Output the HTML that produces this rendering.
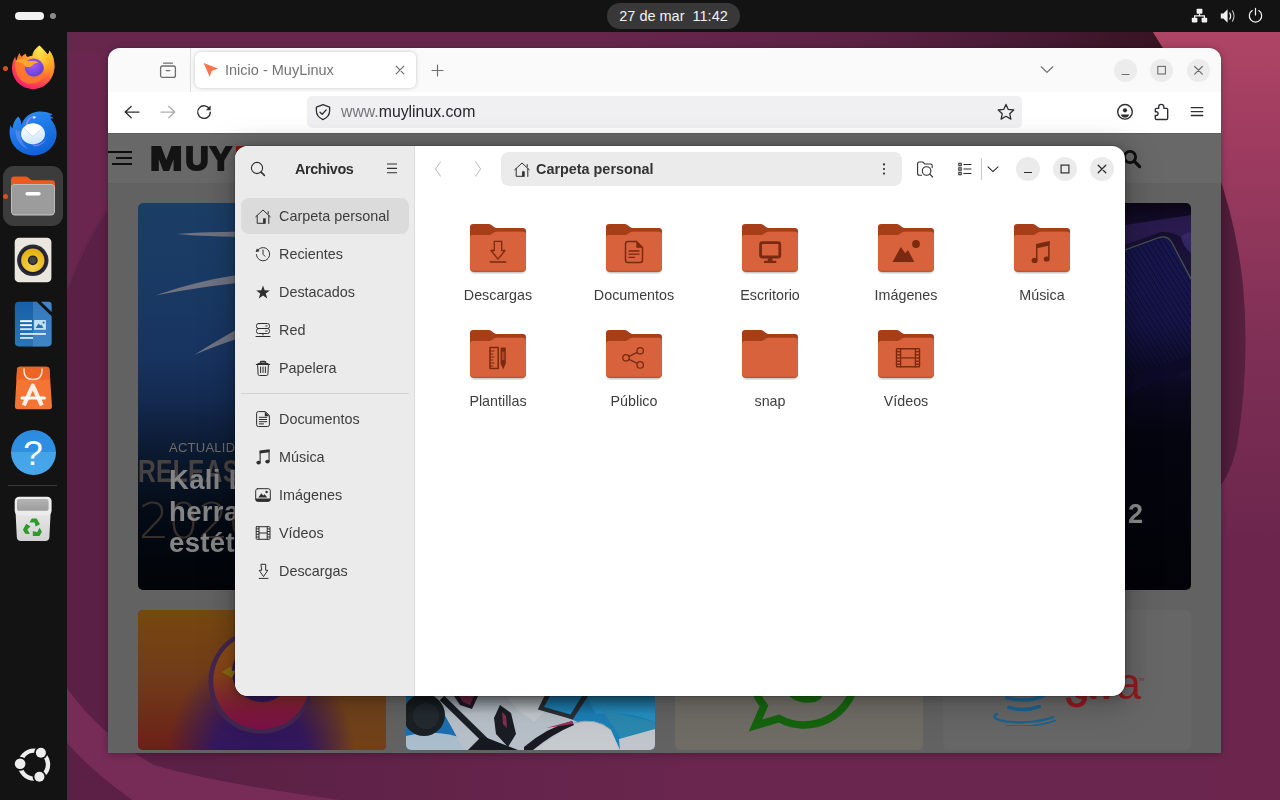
<!DOCTYPE html>
<html lang="es">
<head>
<meta charset="utf-8">
<title>Escritorio Ubuntu</title>
<style>
*{box-sizing:border-box;margin:0;padding:0}
html,body{width:1280px;height:800px;overflow:hidden;background:#6a264e;font-family:"Liberation Sans","DejaVu Sans",sans-serif;}
.abs{position:absolute}
#desk{position:absolute;left:0;top:0;width:1280px;height:800px;overflow:hidden}
#wall{position:absolute;left:0;top:0;width:1280px;height:800px}
/* top bar */
#topbar{position:absolute;left:0;top:0;width:1280px;height:32px;background:#131313}
#clock{position:absolute;left:607px;top:3px;width:133px;height:26px;border-radius:13px;background:#383838;color:#f2f2f2;font-size:14.5px;line-height:26px;text-align:center;white-space:pre}
#act{position:absolute;left:15px;top:12px;width:29px;height:8px;border-radius:4px;background:#f2f2f2}
#actdot{position:absolute;left:50px;top:13px;width:6px;height:6px;border-radius:3px;background:#8c8c8c}
/* dock */
#dock{position:absolute;left:0;top:32px;width:67px;height:768px;background:#131313}
.run{position:absolute;left:3px;width:5px;height:5px;border-radius:50%;background:#d9501e}
/* firefox */
#ff{will-change:transform;position:absolute;left:108px;top:48px;width:1113px;height:705px;border-radius:12px 12px 0 0;overflow:hidden;background:#656565;box-shadow:0 1px 7px rgba(0,0,0,.3)}
#fftabs{position:absolute;left:0;top:0;width:1113px;height:44px;background:#fafafa}
#ffnav{position:absolute;left:0;top:44px;width:1113px;height:41px;background:#ffffff}
#fftab{position:absolute;left:87px;top:4px;width:221px;height:36px;border-radius:6px;background:#fff;box-shadow:0 0 4px rgba(0,0,0,.2)}
#fftab span{position:absolute;left:30px;top:1px;line-height:35px;font-size:14.5px;color:#737376;white-space:nowrap}
#url{position:absolute;left:199px;top:4px;width:715px;height:32px;border-radius:5px;background:#f0f0f2}
#url span{position:absolute;left:34px;top:-.5px;line-height:32px;font-size:15.8px;color:#26262b;white-space:nowrap}
#url span i{font-style:normal;color:#77777c}
.wb{position:absolute;width:23px;height:23px;border-radius:50%;background:#ececec}
#page{position:absolute;left:0;top:85px;width:1113px;height:620px;background:#626262;overflow:hidden}
#phead{position:absolute;left:0;top:0;width:1113px;height:50px;background:#686868;box-shadow:inset 0 1px 0 #5c5c5c}
/* files */
#fm{will-change:transform;position:absolute;left:235px;top:146px;width:890px;height:550px;border-radius:13px;overflow:hidden;background:#fff;box-shadow:0 0 0 1px rgba(0,0,0,.14),0 2px 8px 2px rgba(0,0,0,.17),0 3px 20px 10px rgba(0,0,0,.11),0 6px 32px 16px rgba(0,0,0,.05)}
#side{position:absolute;left:0;top:0;width:180px;height:550px;background:#ebebeb;border-right:1px solid #dcdcdc}
.row{position:absolute;left:6px;width:168px;height:36px;border-radius:8px;font-size:14.4px;color:#3d3d3d;line-height:36px;padding-left:38px;white-space:nowrap}
.row.sel{background:#dbdbdb}
.row svg{position:absolute;left:14px;top:10px;width:16px;height:16px}
#path{position:absolute;left:266px;top:6px;width:401px;height:34px;border-radius:8px;background:#ebebeb}
#path b{position:absolute;left:35px;top:0;line-height:34px;font-size:14.4px;color:#333;white-space:nowrap}
.fb{position:absolute;width:24px;height:24px;border-radius:50%;background:#ebebeb}
.fold{position:absolute;width:136px;height:100px;text-align:center;font-size:14.3px;color:#3d3d3d;}
.fold svg{position:absolute;left:38px;top:0;width:60px;height:52px}
.fold span{position:absolute;left:0;width:136px;top:64.3px;line-height:18px}
</style>
</head>
<body>
<div id="desk">
<svg id="wall" viewBox="0 0 1280 800">
<defs>
<linearGradient id="wtop" x1="600" y1="0" x2="1160" y2="0" gradientUnits="userSpaceOnUse"><stop offset="0" stop-color="#67264c"/><stop offset="0.45" stop-color="#5c2244"/><stop offset="0.8" stop-color="#451932"/><stop offset="1" stop-color="#381322"/></linearGradient>
<linearGradient id="wpink" x1="0" y1="32" x2="0" y2="540" gradientUnits="userSpaceOnUse"><stop offset="0" stop-color="#ae4565"/><stop offset="0.2" stop-color="#a03c60"/><stop offset="0.58" stop-color="#813056"/><stop offset="1" stop-color="#6c264d"/></linearGradient>
<linearGradient id="wcres" x1="1221" y1="0" x2="1250" y2="0" gradientUnits="userSpaceOnUse"><stop offset="0" stop-color="#4a1b36"/><stop offset="1" stop-color="#5a2142"/></linearGradient>
</defs>
<rect width="1280" height="800" fill="#6a264e"/>
<rect x="67" y="32" width="1213" height="20" fill="url(#wtop)"/>
<path d="M1153 32 H1280 V560 H1215 V70 L1163 48 Z" fill="#ae4565"/>
<path d="M1153 32 H1280 V560 H1215 V70 L1163 48 Z" fill="url(#wpink)"/>

<path d="M1215 165 Q1236 220 1243 285 Q1250 360 1238 440 Q1232 475 1215 492 Z" fill="url(#wcres)"/>
<path d="M67 287 Q82 245 110 203 V700 H67 Z" fill="#5b2045"/>
<path d="M67 289 Q82 247 110 205" fill="none" stroke="#7a3060" stroke-width="1" opacity=".6"/>
<linearGradient id="wbot" x1="200" y1="0" x2="700" y2="0" gradientUnits="userSpaceOnUse"><stop offset="0" stop-color="#5b2045"/><stop offset="1" stop-color="#6a264e"/></linearGradient>
<rect x="67" y="700" width="1213" height="100" fill="url(#wbot)"/>
<rect x="1215" y="540" width="65" height="260" fill="#6c264d"/>
<path d="M67 688 Q100 735 154 765 Q216 783 340 800 H132 Q91 771 67 743 Z" fill="#772b57"/>
<path d="M67 743 Q91 771 132 800 H67 Z" fill="#5c2046"/>
</svg>

<div id="topbar">
  <div id="act"></div><div id="actdot"></div>
  <div id="clock">27 de mar  11:42</div>
  <svg class="abs" style="left:1191px;top:8px;width:17px;height:16px" viewBox="0 0 17 16"><g fill="#f2f2f2"><rect x="5.6" y="0.8" width="5.8" height="5" rx="0.8"/><rect x="0.8" y="9.8" width="5.6" height="4.6" rx="0.8"/><rect x="10.6" y="9.8" width="5.6" height="4.6" rx="0.8"/></g><path d="M8.5 5.5 V7.8 M3.6 10 V7.8 H13.4 V10" fill="none" stroke="#f2f2f2" stroke-width="1.2"/></svg>
  <svg class="abs" style="left:1220px;top:8px;width:17px;height:16px" viewBox="0 0 17 16"><path d="M0.8 5.4 H3.4 L7.6 1.2 V14.8 L3.4 10.6 H0.8 Z" fill="#f2f2f2"/><path d="M9.8 5 Q11.6 8 9.8 11" fill="none" stroke="#f2f2f2" stroke-width="1.2" stroke-linecap="round"/><path d="M12.4 2.8 Q15.6 8 12.4 13.2" fill="none" stroke="#bdbdbd" stroke-width="1.1" stroke-linecap="round"/></svg>
  <svg class="abs" style="left:1247px;top:7px;width:17px;height:17px" viewBox="0 0 17 17"><path d="M5.2 3.6 A6.2 6.2 0 1 0 11.8 3.6" fill="none" stroke="#f2f2f2" stroke-width="1.2" stroke-linecap="round"/><path d="M8.5 1.4 V8" stroke="#f2f2f2" stroke-width="1.2" stroke-linecap="round"/></svg>

</div>

<div id="dock">
<div class="run" style="top:33.5px"></div>
<div class="run" style="top:161.5px"></div>
<div class="abs" style="left:3px;top:134px;width:60px;height:60px;border-radius:11px;background:#3c3c3c"></div>
<div class="run" style="top:161.5px"></div>
<!-- firefox -->
<svg class="abs" style="left:9px;top:11px;width:48px;height:48px" viewBox="0 0 48 48">
<defs>
<radialGradient id="ffo" cx="0.72" cy="0.12" r="1.0"><stop offset="0" stop-color="#fff36a"/><stop offset="0.28" stop-color="#ffbd2e"/><stop offset="0.55" stop-color="#ff7a2a"/><stop offset="0.8" stop-color="#ff3d55"/><stop offset="1" stop-color="#e5127d"/></radialGradient>
<radialGradient id="ffp" cx="0.45" cy="0.3" r="0.8"><stop offset="0" stop-color="#b15cf0"/><stop offset="0.6" stop-color="#6e46e0"/><stop offset="1" stop-color="#4a35b8"/></radialGradient>
<linearGradient id="ffy" x1="0" y1="0" x2="0.4" y2="1"><stop offset="0" stop-color="#fff15e"/><stop offset="0.5" stop-color="#ffc02a"/><stop offset="1" stop-color="#ff8a2a"/></linearGradient>
</defs>
<path d="M30.4 2.6 C33 5.5 36 8 38.5 11.5 C40 10.5 40.5 9 40.4 7.6 C44 12 45.6 17.5 45.4 24 C45 36.5 36 46 24.2 46 C12.4 46 3 36.8 3 25 C3 20 4.4 16.4 6.4 13.6 C6.4 15.4 6.8 16.8 7.4 17.8 C8 14.6 9.2 12 10.6 9.8 C10.8 11.6 11.6 13 12.8 13.8 C13.8 12.6 15.2 11.4 16.6 10.8 C16.8 12.2 17.6 13.4 18.8 14 C20.4 13.2 22 12.8 23.4 12.8 C23.6 9 26.4 5.4 30.4 2.6 Z" fill="url(#ffo)"/>
<circle cx="24.6" cy="25.6" r="10.2" fill="url(#ffp)"/>
<path d="M6.6 18.5 C9 16 12.4 15.2 15.4 15.8 C17 17.6 20 18.4 23 18 C26 17.6 28.4 18.6 29.4 20.2 C27 19.8 24.8 20.6 23.4 22.2 C21.6 24.2 18.6 24.4 16 23.2 C15.4 28 18.6 32.2 23 33.2 C28.6 34.4 33.6 30.8 34.6 25.6 C35.8 30.2 34 35.8 29.2 38.8 C22.2 43 12.4 40.2 8.6 32.4 C6.2 27.4 5.8 22.2 6.6 18.5 Z" fill="#ff7a2a" opacity=".9"/>
<path d="M6.6 18.5 C9 16 12.4 15.2 15.4 15.8 C17 17.6 20 18.4 23 18 C26 17.6 28.4 18.6 29.4 20.2 C27 19.8 24.8 20.6 23.4 22.2 C21.6 24.2 18.6 24.4 16 23.2 C14.6 21 11 19 6.6 18.5 Z" fill="#ffa62a"/>
<path d="M30.4 2.6 C33 5.5 36 8 38.5 11.5 C40 10.5 40.5 9 40.4 7.6 C44 12 45.6 17.5 45.4 24 C45.2 28.6 43.6 32.6 41 36 C42 30.6 41 25 38 21.6 C36.6 16.8 33 14 29 13 C29.4 9.4 30 5.8 30.4 2.6 Z" fill="url(#ffy)" opacity=".95"/>
</svg>
<!-- thunderbird -->
<svg class="abs" style="left:9px;top:76px;width:48px;height:48px" viewBox="0 0 48 48">
<defs>
<linearGradient id="tbb" x1="0.2" y1="0" x2="0.6" y2="1"><stop offset="0" stop-color="#2f8ff2"/><stop offset="0.55" stop-color="#1a73e4"/><stop offset="1" stop-color="#1062d6"/></linearGradient>
<linearGradient id="tbe" x1="0" y1="0" x2="0.3" y2="1"><stop offset="0" stop-color="#ffffff"/><stop offset="1" stop-color="#cfe6fb"/></linearGradient>
</defs>
<path d="M9.2 8.5 C11.6 11 12.6 14.4 12.4 17.6 C13.6 12 18.4 5.6 27 4 C33 2.8 39.4 4.4 43.6 6.2 C42.4 6.8 41.4 7.4 40.8 8.2 C42.4 8.4 43.8 9.2 44.6 10.2 C43.2 10.2 42.2 10.6 41.6 11.2 C45.2 15 47.6 20 47.6 25.6 C47.6 37.6 37.6 47.4 25.4 47.4 C12.4 47.4 0.6 38.6 0.6 24 C0.6 21.2 1 18.8 1.6 17.2 C2.2 18.6 2.8 19.8 3.6 20.6 C3.8 15.6 5.8 11.4 9.2 8.5 Z" fill="url(#tbb)"/>
<path d="M6.6 21.6 C5.6 30 11 38.6 20 41.6 C14 37 10.8 30.6 11 23.6 C9.6 23.6 7.8 22.8 6.6 21.6 Z" fill="#5e8cf0" opacity=".75"/>
<path d="M16.6 17.4 C17 12.6 20.6 8.6 25.4 7.6 C21.6 9.8 18.8 13.4 18 18 Z" fill="#9b8af0" opacity=".9"/>
<ellipse cx="24" cy="26" rx="12" ry="10.4" fill="url(#tbe)"/>
<path d="M14.6 19.8 L24 28.6 L33.4 19.8 C31 17 27.8 15.6 24 15.6 C20.2 15.6 17 17 14.6 19.8 Z" fill="#ffffff"/>
<path d="M14.6 19.8 L24 28.6 L33.4 19.8" fill="none" stroke="#bcd9f6" stroke-width=".8"/>
<path d="M23.4 36.6 C29.6 37.6 35.6 34.4 38 29.6 C36 35.6 30.6 38.6 25.6 38.4 C24.6 38 23.8 37.4 23.4 36.6 Z" fill="#7b86f2" opacity=".85"/>
<ellipse cx="25.2" cy="9.4" rx="1.6" ry="1.1" fill="#eaf4ff" transform="rotate(-20 25.2 9.4)"/>
</svg>
<!-- files -->
<svg class="abs" style="left:9px;top:140px;width:48px;height:48px" viewBox="0 0 48 48">
<path d="M2 8 Q2 4.6 5.4 4.6 H16.4 Q18 4.6 19.2 5.6 L21.4 7.4 Q22.6 8.2 24 8.2 H42.6 Q46 8.2 46 11.6 V30 H2 Z" fill="#eb5a1e"/>
<rect x="2" y="12" width="44" height="31.4" rx="4.2" fill="#c9c9c9"/>
<rect x="2.7" y="12.8" width="42.6" height="29.8" rx="3.6" fill="#9c9c9c"/>
<rect x="16.4" y="20" width="15.3" height="3.4" rx="1.7" fill="#ffffff"/>
</svg>
<!-- rhythmbox -->
<svg class="abs" style="left:9px;top:204px;width:48px;height:48px" viewBox="0 0 48 48">
<defs><radialGradient id="rby" cx="0.5" cy="0.75" r="0.7"><stop offset="0" stop-color="#f6d452"/><stop offset="1" stop-color="#e3b010"/></radialGradient></defs>
<rect x="5.7" y="1.7" width="36.7" height="44.6" rx="4.4" fill="#e9e7de"/>
<circle cx="23.8" cy="24.3" r="15.7" fill="#2b2b36"/>
<circle cx="23.8" cy="24.3" r="13.4" fill="#1d1d30"/>
<circle cx="23.8" cy="24.3" r="11.7" fill="url(#rby)"/>
<circle cx="23.8" cy="24.3" r="4.9" fill="#262626"/>
<circle cx="23.8" cy="24.3" r="3.4" fill="#444"/>
</svg>
<!-- writer -->
<svg class="abs" style="left:9px;top:268px;width:48px;height:48px" viewBox="0 0 48 48">
<defs><clipPath id="wrc"><path d="M9.6 1.8 H27.7 L42.6 16.2 V42.6 Q42.6 46.4 38.8 46.4 H9.6 Q5.9 46.4 5.9 42.6 V5.6 Q5.9 1.8 9.6 1.8 Z"/></clipPath>
<linearGradient id="wrg" x1="0" y1="0" x2="0" y2="1"><stop offset="0" stop-color="#165ea6"/><stop offset="1" stop-color="#2a76ba"/></linearGradient></defs>
<g clip-path="url(#wrc)"><rect x="0" y="0" width="48" height="48" fill="url(#wrg)"/><rect x="24" y="0" width="24" height="48" fill="#5a9ad6" opacity=".45"/></g>
<path d="M32 1.8 H39.6 Q42.6 1.8 42.6 4.8 V12 Z" fill="#3f86c8"/>
<g fill="#ffffff"><rect x="11.1" y="20.2" width="11.8" height="1.9"/><rect x="11.1" y="24.2" width="11.8" height="1.9"/><rect x="11.1" y="28.2" width="11.8" height="1.9" opacity=".8"/><rect x="11.1" y="33" width="25.8" height="1.9" opacity=".8"/><rect x="11.1" y="37" width="13" height="1.9" opacity=".8"/></g>
<rect x="25.1" y="20" width="11.8" height="9.8" fill="#bfe2f6"/>
<path d="M26.6 28 L29.6 23.4 L31.4 25.4 L32.4 24.4 L34.4 28 Z" fill="#2a6fb4"/><circle cx="34.6" cy="22.6" r="1.1" fill="#2a6fb4"/>
</svg>
<!-- app center -->
<svg class="abs" style="left:9px;top:332px;width:48px;height:48px" viewBox="0 0 48 48">
<defs><clipPath id="acc"><path d="M10.8 2.8 H37.6 Q40.2 2.8 40.5 5.4 L43 42 Q43.2 45.2 40 45.2 H8.9 Q5.7 45.2 5.9 42 L8 5.4 Q8.2 2.8 10.8 2.8 Z"/></clipPath></defs>
<g clip-path="url(#acc)"><rect width="48" height="48" fill="#f37433"/><rect width="48" height="15.6" fill="#ee6424"/></g>
<path d="M15 4.6 V6.4 Q15 15.4 24 15.4 Q33 15.4 33 6.4 V4.6" fill="none" stroke="#f7e7dc" stroke-width="1.5"/>
<path d="M14.8 41.4 L23.8 21.6 L32.8 41.4" fill="none" stroke="#fbeee6" stroke-width="4.2" stroke-linejoin="round"/>
<rect x="11.5" y="32.4" width="25.4" height="3.2" rx="1.6" fill="#ffffff"/>
</svg>
<!-- help -->
<div class="abs" style="left:10.5px;top:397.7px;width:45px;height:45px;border-radius:50%;background:linear-gradient(#2c8bde 0,#2f90e2 50%,#45a3e8 50%,#48a6ea 100%);color:#fff;text-align:center;font-size:35px;line-height:46px;font-family:'Liberation Sans',sans-serif">?</div>
<div class="abs" style="left:8px;top:453px;width:49px;height:1px;background:#3b3b3b"></div>
<!-- trash -->
<svg class="abs" style="left:9px;top:461px;width:48px;height:48px" viewBox="0 0 48 48">
<defs><linearGradient id="trb" x1="0" y1="0" x2="0" y2="1"><stop offset="0" stop-color="#e6e6e6"/><stop offset="1" stop-color="#d2d2d2"/></linearGradient>
<linearGradient id="tri" x1="0" y1="0" x2="0" y2="1"><stop offset="0" stop-color="#b4b4b4"/><stop offset="1" stop-color="#9c9c9c"/></linearGradient></defs>
<path d="M6.6 20 H41.6 L40.4 44 Q40.2 48 36.2 48 H12 Q8 48 7.8 44 Z" fill="url(#trb)"/>
<rect x="5.7" y="3.8" width="36.9" height="18.4" rx="4.4" fill="#ececec"/>
<rect x="8" y="6" width="31.6" height="11.8" rx="2.6" fill="url(#tri)"/>
<g fill="#2f9a2c" transform="translate(24,35)">
<g id="rcy"><path d="M-1.2 -9.6 L3.6 -9.6 L7 -3.8 L2.6 -1.4 L1.6 -5.6 L-3.6 -5.6 Z"/></g>
<use href="#rcy" transform="rotate(120)"/><use href="#rcy" transform="rotate(240)"/>
</g>
</svg>
<!-- ubuntu -->
<svg class="abs" style="left:9px;top:709px;width:48px;height:48px" viewBox="0 0 48 48">
<circle cx="25" cy="23.6" r="14" fill="none" stroke="#ededed" stroke-width="4.4"/>
<g fill="#131313"><circle cx="11.1" cy="22.7" r="7"/><circle cx="31.9" cy="11.7" r="6.8"/><circle cx="30.4" cy="35.8" r="6.8"/></g>
<g fill="#ededed"><circle cx="11.1" cy="22.7" r="5.3"/><circle cx="31.9" cy="11.7" r="5"/><circle cx="30.4" cy="35.8" r="5"/></g>
</svg>
</div>

<div id="ff">
  <div id="fftabs">
    
<svg class="abs" style="left:50px;top:12px;width:20px;height:20px" viewBox="0 0 20 20"><g fill="none" stroke="#6e6e6e" stroke-width="1.3" stroke-linecap="round" stroke-linejoin="round"><rect x="2.6" y="6" width="14.8" height="11.4" rx="2"/><path d="M5.6 3.2 H14.4"/><path d="M8.2 10.6 H11.8"/></g></svg>
<div class="abs" style="left:82px;top:0;width:1px;height:44px;background:#dcdcdc"></div>
<div id="fftab"><svg class="abs" style="left:8px;top:10px;width:16px;height:16px" viewBox="0 0 16 16"><path d="M0.7 0.9 L15 6.5 L8.6 8.9 L6.7 15 Z" fill="#f9744f"/></svg><span>Inicio - MuyLinux</span>
<svg class="abs" style="left:197px;top:10px;width:16px;height:16px" viewBox="0 0 16 16"><path d="M4.2 4.2 L11.8 11.8 M11.8 4.2 L4.2 11.8" stroke="#6e6e6e" stroke-width="1.2" stroke-linecap="round"/></svg></div>
<svg class="abs" style="left:321px;top:14px;width:17px;height:17px" viewBox="0 0 17 17"><path d="M8.5 3 V14 M3 8.5 H14" stroke="#6e6e6e" stroke-width="1.2" stroke-linecap="round"/></svg>
<svg class="abs" style="left:931px;top:14px;width:16px;height:16px" viewBox="0 0 16 16"><path d="M2.2 4.8 L8 10.4 L13.8 4.8" fill="none" stroke="#6e6e6e" stroke-width="1.2" stroke-linecap="round" stroke-linejoin="round"/></svg>
<div class="wb" style="left:1006px;top:11px"><svg viewBox="0 0 23 23" width="23" height="23"><path d="M7.6 15.5 H15.4" stroke="#6e6e6e" stroke-width="1.1"/></svg></div>
<div class="wb" style="left:1042px;top:11px"><svg viewBox="0 0 23 23" width="23" height="23"><rect x="7.8" y="7.4" width="7.6" height="7.6" fill="none" stroke="#6e6e6e" stroke-width="1.1"/></svg></div>
<div class="wb" style="left:1079px;top:11px"><svg viewBox="0 0 23 23" width="23" height="23"><path d="M7.7 7.5 L15.3 15.1 M15.3 7.5 L7.7 15.1" stroke="#6e6e6e" stroke-width="1.2" stroke-linecap="round"/></svg></div>

  </div>
  <div id="ffnav">
    
<svg class="abs" style="left:14px;top:10px;width:20px;height:20px" viewBox="0 0 20 20"><path d="M17 10.1 H3.3 M9.2 4.4 L3.2 10.1 L9.2 15.8" fill="none" stroke="#2f2f33" stroke-width="1.35" stroke-linecap="round" stroke-linejoin="round"/></svg>
<svg class="abs" style="left:50px;top:10px;width:20px;height:20px" viewBox="0 0 20 20"><path d="M3 10.1 H16.7 M10.8 4.4 L16.8 10.1 L10.8 15.8" fill="none" stroke="#adadad" stroke-width="1.35" stroke-linecap="round" stroke-linejoin="round"/></svg>
<svg class="abs" style="left:86px;top:10px;width:20px;height:20px" viewBox="0 0 20 20"><path d="M15.6 7.2 A6.3 6.3 0 1 0 16.3 10.2" fill="none" stroke="#2f2f33" stroke-width="1.35" stroke-linecap="round"/><path d="M16.6 3.4 V8.2 H11.8 Z" fill="#2f2f33"/></svg>
<div id="url"><svg class="abs" style="left:7px;top:7px;width:18px;height:18px" viewBox="0 0 18 18"><g fill="none" stroke="#2f2f33" stroke-width="1.3" stroke-linecap="round" stroke-linejoin="round"><path d="M9 1.6 L15.6 4.2 V8 Q15.6 13.6 9 16.6 Q2.4 13.6 2.4 8 V4.2 Z"/><path d="M6 9.2 L8.2 11.3 L12.2 6.9"/></g></svg><span><i>www.</i>muylinux.com</span>
<svg class="abs" style="left:689px;top:6px;width:20px;height:20px" viewBox="0 0 20 20"><polygon points="10,2.4 12.3,7.4 17.8,8 13.7,11.7 14.9,17.1 10,14.3 5.1,17.1 6.3,11.7 2.2,8 7.7,7.4" fill="none" stroke="#2f2f33" stroke-width="1.3" stroke-linejoin="round"/></svg></div>
<svg class="abs" style="left:1007px;top:10px;width:20px;height:20px" viewBox="0 0 20 20"><circle cx="10" cy="9.8" r="7.3" fill="none" stroke="#2f2f33" stroke-width="1.4"/><circle cx="10" cy="8.3" r="2.1" fill="#2f2f33"/><path d="M5.8 12.4 H14.2 Q13 15.6 10 15.6 Q7 15.6 5.8 12.4 Z" fill="#2f2f33"/></svg>
<svg class="abs" style="left:1043px;top:10px;width:20px;height:20px" viewBox="0 0 20 20"><path d="M7.7 6.3 V4.8 Q7.7 2.3 10.25 2.3 Q12.8 2.3 12.8 4.8 V6.3 H15.5 Q16.7 6.3 16.7 7.5 V16.3 Q16.7 17.5 15.5 17.5 H5.45 Q4.25 17.5 4.25 16.3 V13.5 H5.2 Q7.1 13.5 7.1 11.6 Q7.1 9.7 5.2 9.7 H4.25 V7.5 Q4.25 6.3 5.45 6.3 Z" fill="none" stroke="#2f2f33" stroke-width="1.35" stroke-linejoin="round"/></svg>
<svg class="abs" style="left:1079px;top:10px;width:20px;height:20px" viewBox="0 0 20 20"><path d="M4.2 5.7 H15.8 M4.2 9.6 H15.8 M4.2 13.5 H15.8" stroke="#2f2f33" stroke-width="1.3" stroke-linecap="round"/></svg>

  </div>
  <div id="page">
<div id="phead"></div><div class="abs" style="left:0;top:-1px;width:1113px;height:622px">
<div class="abs" style="left:0;top:19px;width:24px;height:2px;background:#0e0e0e"></div>
<div class="abs" style="left:8px;top:25px;width:16px;height:2px;background:#0e0e0e"></div>
<div class="abs" style="left:4px;top:31px;width:20px;height:2px;background:#0e0e0e"></div>
<div class="abs" id="muy" style="left:41.5px;top:8px;font-size:32.4px;line-height:38px;font-weight:bold;color:#141414;letter-spacing:1.4px;white-space:nowrap;-webkit-text-stroke:2.1px #141414"><span style="display:inline-block;transform:scaleX(1.2);transform-origin:0 50%;margin-right:7.3px">M</span>UY</div>
<div class="abs" style="left:128px;top:14px;width:30px;height:24px;background:#8b1a04"></div>
<svg class="abs" style="left:1013px;top:16px;width:22px;height:22px" viewBox="0 0 22 22"><circle cx="9" cy="9" r="5.6" fill="none" stroke="#0e0e0e" stroke-width="2.8"/><path d="M13.2 13.2 L18.6 18.6" stroke="#0e0e0e" stroke-width="3.2" stroke-linecap="round"/></svg>
<!-- hero left -->
<div class="abs" style="left:30px;top:71px;width:560px;height:387px;border-radius:5px;overflow:hidden;background:linear-gradient(180deg,#1b3e65 0%,#193a64 20%,#17335f 40%,#142b52 50%,#0f213f 58%,#091629 68%,#040b16 80%,#02060c 92%,#020408 100%)">
 <svg class="abs" style="left:0;top:0;width:120px;height:387px" viewBox="0 0 120 387"><g fill="#6f7382"><path d="M38 31 Q65 28.8 120 28.6 V34 Q65 33.6 38 31 Z"/><path d="M17.4 92.5 Q55 79 97 72.3 L120 69 V78.5 L97 80.2 Q55 85 17.4 92.5 Z"/><path d="M56.3 151.8 Q78 138 97 127.4 L120 117 V129 L97 136.6 Q78 143 56.3 151.8 Z"/></g></svg>
 <div class="abs" style="left:0px;top:250.5px;font-size:30.7px;line-height:36px;font-weight:bold;letter-spacing:.4px;color:#474240;white-space:nowrap;transform:scaleX(.8);transform-origin:0 0">RELEASE</div>
 <div class="abs" style="left:0.5px;top:290.5px;font-family:'DejaVu Sans',sans-serif;font-weight:200;font-size:49px;line-height:56px;letter-spacing:-1.6px;color:#372f2a;white-space:nowrap">2026</div>
 <div class="abs" style="left:31px;top:237.2px;font-size:13px;line-height:16px;letter-spacing:.25px;color:#6f6b6b;white-space:nowrap">ACTUALIDAD</div>
 <div class="abs" style="left:31px;top:261.3px;font-size:27.5px;line-height:31.25px;font-weight:bold;color:#858585;white-space:nowrap;letter-spacing:.35px">Kali Linux 2026.1 estrena<br>herramientas y un cambio<br>estético importante</div>
</div>
<!-- hero right -->
<div class="abs" style="left:592px;top:71px;width:491px;height:387px;border-radius:5px;overflow:hidden;background:linear-gradient(180deg,#0b0618 0%,#150d2c 6%,#1a1238 14%,#15123c 40%,#0a0920 47%,#05050f 60%,#020208 100%)">
 <svg class="abs" style="left:425px;top:0;width:66px;height:387px" viewBox="0 0 66 387"><defs><pattern id="strp" width="4.4" height="8" patternUnits="userSpaceOnUse" patternTransform="rotate(-32)"><rect width="4.4" height="8" fill="#171546"/><rect width="1" height="8" fill="#0c0b36"/><rect x="1" width=".7" height="8" fill="#1c1a60"/></pattern>
 <linearGradient id="hrf" x1="0" y1="0" x2="0" y2="1"><stop offset="0" stop-color="#05050f" stop-opacity="0"/><stop offset=".45" stop-color="#05050f" stop-opacity=".1"/><stop offset="1" stop-color="#05050f" stop-opacity=".7"/></linearGradient></defs>
 <path d="M0 22 L66 12 V44 Q54 28 36 29 L0 42 Z" fill="#2b1d52" opacity=".85"/>
 <path d="M56 34 Q62 28 66 30 V50 Q58 44 56 34 Z" fill="#3a2a6a" opacity=".8"/>
 <path d="M0 47 L34 34.5 Q42 32 46.5 39 L66 76 V152 L0 176 Z" fill="url(#strp)"/>
 <path d="M0 47 L34 34.5 Q42 32 46.5 39 L66 76" fill="none" stroke="#46544e" stroke-width="1.3"/>
 <path d="M0 100 L66 76 V152 L0 176 Z" fill="url(#hrf)"/>
 <path d="M0 176 L66 152 V166 L0 192 Z" fill="#0c0a26"/>
 </svg>
 <div class="abs" style="left:428px;top:296px;font-size:27px;line-height:30px;font-weight:bold;color:#8b8b8b">2</div>
</div>
<!-- cards -->
<div class="abs" style="left:30px;top:478px;width:248px;height:140px;border-radius:5px;overflow:hidden;background:#5a2a30">
 <svg class="abs" style="left:0;top:0;width:248px;height:140px" viewBox="0 0 248 140"><defs>
 <radialGradient id="c1a" cx="123" cy="150" r="100" gradientUnits="userSpaceOnUse" gradientTransform="translate(123 150) scale(0.95 1.1) translate(-123 -150)"><stop offset="0" stop-color="#2c1658"/><stop offset="0.5" stop-color="#33185a"/><stop offset="1" stop-color="#33185a" stop-opacity="0"/></radialGradient>
 <linearGradient id="c1b" x1="0" y1="0" x2="0" y2="1"><stop offset="0" stop-color="#77480f"/><stop offset="0.5" stop-color="#703a1a"/><stop offset="1" stop-color="#6c2018"/></linearGradient>
 <linearGradient id="c1c" x1="0" y1="0" x2="1" y2="0"><stop offset="0.55" stop-color="#71441a" stop-opacity="0"/><stop offset="0.85" stop-color="#71441a" stop-opacity=".9"/></linearGradient>
 <linearGradient id="c1r" x1="0" y1="0" x2="0" y2="1"><stop offset="0" stop-color="#8a5610"/><stop offset="0.45" stop-color="#86401a"/><stop offset="0.8" stop-color="#7e1a3a"/><stop offset="1" stop-color="#7a1048"/></linearGradient></defs>
 <rect width="248" height="140" fill="url(#c1b)"/><rect width="248" height="140" fill="url(#c1c)"/><rect width="248" height="140" fill="url(#c1a)"/>
 <circle cx="123" cy="71.3" r="52.5" fill="#43264e"/><circle cx="123.5" cy="71" r="48.3" fill="url(#c1r)"/><circle cx="124" cy="62" r="30" fill="#30175a"/>
 <path d="M84 62 L93 56 L94 61 L98 60 L94 68 Z" fill="#8a6a10"/>
 </svg>
</div>
<div class="abs" style="left:298px;top:478px;width:249px;height:140px;border-radius:5px;overflow:hidden;background:#1a78ae">
 <svg class="abs" style="left:0;top:0;width:249px;height:140px" viewBox="0 0 249 140">
 <defs><linearGradient id="c2s" x1="0" y1="86" x2="0" y2="104" gradientUnits="userSpaceOnUse"><stop offset="0" stop-color="#000" stop-opacity=".38"/><stop offset="1" stop-color="#000" stop-opacity="0"/></linearGradient></defs>
 <rect width="249" height="140" fill="#1b80b8"/>
 <path d="M180 86 L249 86 V112 Q220 100 190 104 Z" fill="#2490c4"/>
 <path d="M196 100 L249 112 V122 L215 128 Z" fill="#2a88b0"/>
 <path d="M0 100 H60 V140 H0 Z" fill="#1c6fb0"/>
 <path d="M0 126 Q30 118 62 130 L72 140 H0 Z" fill="#a9bdcd"/>
 <path d="M28 86 H152 L142 100 L172 112 L206 140 H58 L46 118 Z" fill="#b7bfc8"/>
 <path d="M100 86 H150 L140 100 L128 112 L112 100 Z" fill="#c3c9cf"/>
 <circle cx="18" cy="105" r="21" fill="#1a2024"/><circle cx="20" cy="106" r="13" fill="#222a30"/>
 <path d="M36 88 L86 137" stroke="#1a2026" stroke-width="6.5" fill="none"/>
 <path d="M76 126 L112 140 H62 Z" fill="#161a20"/>
 <path d="M48 86 H72 L66 99 L54 95 Z" fill="#231a2a"/><path d="M53 86 H68 L64 95 L57 92 Z" fill="#8a2c52"/>
 <path d="M94 95 L105 103 L110 124 L102 137 L90 124 L88 108 Z" fill="#1a1e24"/><path d="M96 102 L100 106 L101 118 L97 114 Z" fill="#8a2c52"/>
 <path d="M138.4 86 L131.8 99.5 L166.8 109.4 L182 86 Z" fill="#2a3036"/><path d="M144 86 L138 97 L164.5 104.5 L176 86 Z" fill="#1f88bf"/>
 <path d="M128 140 L168 113 Q190 107 205 120 L214 140 Z" fill="#c6c9cd"/>
 <path d="M168 113 Q190 107 205 120" fill="none" stroke="#9aa0a8" stroke-width="1"/>
 <path d="M213 129 L249 119 V140 H214 Z" fill="#bfc5cb"/>
 <path d="M118 137 Q140 118 166 111 L168 115 Q146 124 127 140 H118 Z" fill="#1a1a22"/>
 <path d="M140 118 L166 111 L167 114 Z" fill="#a02a5a"/>
 <rect x="0" y="86" width="249" height="18" fill="url(#c2s)"/>
 </svg>
</div>
<div class="abs" style="left:567px;top:478px;width:248px;height:140px;border-radius:5px;overflow:hidden;background:#6f6c66">
 <svg class="abs" style="left:0;top:0;width:248px;height:140px" viewBox="0 0 248 140"><g fill="none" stroke="#15640e" stroke-width="7.6" stroke-linejoin="miter"><path d="M89 96 A52 52 0 1 1 104 108.5 L80.5 115.5 Z"/></g><path d="M108 78 Q118 96 140 92 Q150 88 146 82 L136 78 Q130 84 124 80 Z" fill="#15640e"/></svg>
</div>
<div class="abs" style="left:835px;top:478px;width:248px;height:140px;border-radius:5px;overflow:hidden;background:#666666">
 <div class="abs" style="left:108px;top:49px;font-size:44px;line-height:50px;color:#8f1a1e;letter-spacing:-1px;white-space:nowrap"><span style="position:absolute;left:14px;top:4px;font-size:52px;line-height:52px">J</span><span style="visibility:hidden">J</span>ava</div>
 <div class="abs" style="left:195px;top:67px;font-size:4px;line-height:5px;color:#8f1a1e">TM</div>
 <svg class="abs" style="left:42px;top:72px;width:80px;height:44px" preserveAspectRatio="none" viewBox="0 0 80 50"><g fill="none" stroke="#1a6290" stroke-linecap="round"><path d="M22 18 Q40 24 58 16" stroke-width="4"/><path d="M24 29 Q40 34 54 28" stroke-width="4"/><path d="M12 36 Q4 42 22 45 Q48 48 68 40" stroke-width="2.6"/><path d="M22 50 Q50 52 70 44" stroke-width="2"/></g></svg>
</div>
</div>
  </div>
</div>

<div id="fm">
  <div id="side">
<svg class="abs" style="left:15px;top:15px;width:16px;height:16px" viewBox="0 0 16 16"><g fill="none" stroke="#2e2e2e" stroke-width="1.1" stroke-linecap="round"><circle cx="7" cy="7" r="5.6"/><path d="M11.1 11.1 L14.4 14.4" stroke-width="1.5"/></g></svg>
<b class="abs" id="archivos" style="left:60px;top:13px;line-height:20px;font-size:14.4px;letter-spacing:-.4px;color:#2e2e2e;white-space:nowrap">Archivos</b>
<svg class="abs" style="left:149px;top:15px;width:16px;height:16px" viewBox="0 0 16 16"><path d="M3 3 H13 M3 7.4 H13 M3 11.8 H13" stroke="#2e2e2e" stroke-width="1.1" fill="none"/></svg>
<div class="row sel" style="top:52px"><svg viewBox="0 0 16 16"><g fill="none" stroke="#2e2e2e" stroke-width="1" stroke-linecap="round" stroke-linejoin="round"><path d="M0.7 8.8 L8 2 L15.3 8.8"/><path d="M2.2 7.6 V15.3 H8.3"/><path d="M13.8 7.6 V15.5"/><path d="M13.2 3.6 V5.8"/></g><rect x="8.1" y="10.3" width="2.6" height="5.5" fill="#2e2e2e"/></svg><span>Carpeta personal</span></div>
<div class="row" style="top:90px"><svg viewBox="0 0 16 16"><g fill="none" stroke="#2e2e2e" stroke-width="1" stroke-linecap="round" stroke-linejoin="round"><path d="M2.2 5.0 A6.6 6.6 0 1 1 1.4 8.6"/><path d="M8 4 V8.3 L10 10.3"/></g><path d="M0.6 5.9 L1.9 2.6 L4.6 5.2 Z" fill="#2e2e2e"/></svg><span>Recientes</span></div>
<div class="row" style="top:128px"><svg viewBox="0 0 16 16"><polygon points="8.00,1.40 9.70,6.25 14.85,6.38 10.76,9.50 12.23,14.42 8.00,11.50 3.77,14.42 5.24,9.50 1.15,6.38 6.30,6.25" fill="#2e2e2e"/></svg><span>Destacados</span></div>
<div class="row" style="top:166px"><svg viewBox="0 0 16 16"><g fill="none" stroke="#2e2e2e" stroke-width="1" stroke-linecap="round" stroke-linejoin="round"><rect x="1.5" y="1.5" width="13" height="5" rx="2"/><rect x="1.5" y="6.5" width="13" height="5" rx="2"/><path d="M10.8 4 H12.2 M10.8 9 H12.2"/><path d="M8 11.5 V13"/><path d="M1 14.5 H15"/></g></svg><span>Red</span></div>
<div class="row" style="top:204px"><svg viewBox="0 0 16 16"><g fill="none" stroke="#2e2e2e" stroke-width="1" stroke-linecap="round" stroke-linejoin="round"><path d="M1.3 4.5 H14.7"/><path d="M5.5 4.2 V2.6 Q5.5 1.6 6.5 1.6 H9.5 Q10.5 1.6 10.5 2.6 V4.2" stroke-width="1.6"/><path d="M2.6 4.8 L3.1 14.2 Q3.2 15.5 4.5 15.5 H11.5 Q12.8 15.5 12.9 14.2 L13.4 4.8"/><path d="M5.6 7 V12.6 M8 7 V12.6 M10.4 7 V12.6"/></g><path d="M1.3 4.5 L3.2 3 H12.8 L14.7 4.5 Z" fill="#2e2e2e"/></svg><span>Papelera</span></div>
<div class="row" style="top:255px"><svg viewBox="0 0 16 16"><g fill="none" stroke="#2e2e2e" stroke-width="1" stroke-linecap="round" stroke-linejoin="round"><path d="M10 0.6 H3.3 Q1.6 0.6 1.6 2.3 V13.8 Q1.6 15.5 3.3 15.5 H12.7 Q14.4 15.5 14.4 13.8 V5 Z"/><path d="M4.3 6.3 H11.7 M4.3 8.5 H11.7 M4.3 10.7 H11.7 M4.3 12.9 H8.5"/></g><path d="M9.8 0.6 L14.4 5.2 H9.8 Z" fill="#2e2e2e"/></svg><span>Documentos</span></div>
<div class="row" style="top:293px"><svg viewBox="0 0 16 16"><g fill="#2e2e2e"><path d="M4.6 1.6 L14.6 0.2 V3.3 L4.6 4.6 Z"/><rect x="4.6" y="2" width="1.1" height="11.5"/><rect x="13.5" y="1" width="1.1" height="11.4"/><ellipse cx="3.6" cy="13.6" rx="2.2" ry="1.9"/><ellipse cx="12.5" cy="12.6" rx="2.2" ry="1.9"/></g></svg><span>Música</span></div>
<div class="row" style="top:331px"><svg viewBox="0 0 16 16"><g fill="none" stroke="#2e2e2e" stroke-width="1" stroke-linecap="round" stroke-linejoin="round"><rect x="0.7" y="1.7" width="14.6" height="12.6" rx="2"/></g><path d="M0.7 11.5 H15.3 V12.8 Q15.3 14.6 13.5 14.6 H2.5 Q0.7 14.6 0.7 12.8 Z" fill="#2e2e2e"/><path d="M3.3 10.6 L6.3 6.2 L8.2 8.6 L9.6 7.2 L12.3 10.6 Z" fill="#2e2e2e"/><circle cx="11.6" cy="5" r="1.2" fill="#2e2e2e"/></svg><span>Imágenes</span></div>
<div class="row" style="top:369px"><svg viewBox="0 0 16 16"><g fill="none" stroke="#2e2e2e" stroke-width="1" stroke-linecap="round" stroke-linejoin="round"><rect x="1.2" y="1.7" width="13.8" height="12.6" rx="0.6"/><path d="M4 1.7 V14.3 M12.2 1.7 V14.3 M4 8 H12.2"/></g><g fill="#2e2e2e"><rect x="1.2" y="3.4" width="2.8" height="1"/><rect x="1.2" y="6" width="2.8" height="1"/><rect x="1.2" y="8.8" width="2.8" height="1"/><rect x="1.2" y="11.5" width="2.8" height="1"/><rect x="12.2" y="3.4" width="2.8" height="1"/><rect x="12.2" y="6" width="2.8" height="1"/><rect x="12.2" y="8.8" width="2.8" height="1"/><rect x="12.2" y="11.5" width="2.8" height="1"/></g></svg><span>Vídeos</span></div>
<div class="row" style="top:407px"><svg viewBox="0 0 16 16"><g fill="none" stroke="#2e2e2e" stroke-width="1" stroke-linecap="round" stroke-linejoin="round"><path d="M6.3 1.3 H10.7 V7.3 H12.8 L8.5 13.6 L4.2 7.3 H6.3 Z"/><path d="M4.2 15.4 H13"/></g></svg><span>Descargas</span></div>
<div class="abs" style="left:6px;top:247px;width:168px;height:1px;background:#d4d4d4"></div>
  </div>
  
<svg class="abs" style="left:197px;top:15px;width:12px;height:16px" viewBox="0 0 12 16"><path d="M8.4 1 L3.4 8 L8.4 15" fill="none" stroke="#c4c4c4" stroke-width="1.1" stroke-linecap="round" stroke-linejoin="round"/></svg>
<svg class="abs" style="left:237px;top:15px;width:12px;height:16px" viewBox="0 0 12 16"><path d="M3.6 1 L8.6 8 L3.6 15" fill="none" stroke="#c4c4c4" stroke-width="1.1" stroke-linecap="round" stroke-linejoin="round"/></svg>
<div id="path"><svg class="abs" style="left:13px;top:9px;width:16px;height:16px" viewBox="0 0 16 16"><g fill="none" stroke="#2e2e2e" stroke-width="1" stroke-linecap="round" stroke-linejoin="round"><path d="M0.7 8.8 L8 2 L15.3 8.8"/><path d="M2.2 7.6 V15.3 H8.3"/><path d="M13.8 7.6 V15.5"/><path d="M13.2 3.6 V5.8"/></g><rect x="8.1" y="10.3" width="2.6" height="5.5" fill="#2e2e2e"/></svg><b>Carpeta personal</b><svg class="abs" style="left:375px;top:9px;width:16px;height:16px" viewBox="0 0 16 16"><g fill="#2e2e2e"><circle cx="8" cy="3.4" r="1.05"/><circle cx="8" cy="8" r="1.05"/><circle cx="8" cy="12.6" r="1.05"/></g></svg></div>
<svg class="abs" style="left:681px;top:14px;width:18px;height:18px" viewBox="0 0 18 18"><g fill="none" stroke="#2e2e2e" stroke-width="1.1" stroke-linecap="round" stroke-linejoin="round"><path d="M5.5 15.2 H3.2 Q1.6 15.2 1.6 13.6 V3.6 Q1.6 2 3.2 2 H6.2 Q7 2 7.5 2.6 L8.6 4 H14.6 Q16.2 4 16.2 5.6 V7.6"/><circle cx="10.6" cy="11" r="4.3"/><path d="M13.8 14.2 L16.6 17"/></g></svg>
<svg class="abs" style="left:722px;top:15px;width:16px;height:16px" viewBox="0 0 16 16"><g fill="none" stroke="#2e2e2e" stroke-width="1.1"><rect x="1.8" y="2.3" width="2.4" height="2.4"/><rect x="1.8" y="6.8" width="2.4" height="2.4"/><rect x="1.8" y="11.3" width="2.4" height="2.4"/><path d="M6.4 3.5 H14.4 M6.4 8 H14.4 M6.4 12.5 H14.4" stroke-width="1.2"/></g></svg>
<div class="abs" style="left:746px;top:12px;width:1px;height:22px;background:#c9c9c9"></div>
<svg class="abs" style="left:750px;top:15px;width:16px;height:16px" viewBox="0 0 16 16"><path d="M3 5.8 L8 10.6 L13 5.8" fill="none" stroke="#2e2e2e" stroke-width="1.1" stroke-linecap="round" stroke-linejoin="round"/></svg>
<div class="fb" style="left:781px;top:11px"><svg viewBox="0 0 24 24" width="24" height="24"><path d="M8 15.5 H16" stroke="#2e2e2e" stroke-width="1.2"/></svg></div>
<div class="fb" style="left:818px;top:11px"><svg viewBox="0 0 24 24" width="24" height="24"><rect x="8.1" y="8.1" width="7.8" height="7.8" fill="none" stroke="#2e2e2e" stroke-width="1.2"/></svg></div>
<div class="fb" style="left:855px;top:11px"><svg viewBox="0 0 24 24" width="24" height="24"><path d="M8.2 8.2 L15.8 15.8 M15.8 8.2 L8.2 15.8" stroke="#2e2e2e" stroke-width="1.3" stroke-linecap="round"/></svg></div>
<div class="fold" style="left:195px;top:76px"><svg viewBox="-2 -2 60 52"><defs><filter id="fs" x="-10%" y="-10%" width="120%" height="130%"><feGaussianBlur stdDeviation="0.9"/></filter></defs><path d="M1 30 H55 V45 Q55 49.3 51 49.3 H5 Q1 49.3 1 45 Z" fill="#000" opacity=".28" filter="url(#fs)"/><path d="M0 3.2 Q0 0 3.2 0 H18.6 Q20.2 0 21.4 1 L24 3.1 Q25.2 4 26.8 4 H52.8 Q56 4 56 7.2 V40 H0 Z" fill="#a63e18"/><path d="M0 13.8 Q0 11 2.8 11 H19.2 Q20.8 11 22 10.1 L24.4 8.5 Q25.6 7.7 27.2 7.7 H52.8 Q56 7.7 56 10.9 V44 Q56 48 52 48 H4 Q0 48 0 44 Z" fill="#bf5330"/><path d="M0 13.8 Q0 11 2.8 11 H19.2 Q20.8 11 22 10.1 L24.4 8.5 Q25.6 7.7 27.2 7.7 H52.8 Q56 7.7 56 10.9 V42.8 Q56 46.8 52 46.8 H4 Q0 46.8 0 42.8 Z" fill="#d7623b"/><g fill="none" stroke="#7a2a10" stroke-width="1.3" stroke-linejoin="round" stroke-linecap="round"><path d="M24.3 17.4 H31.7 V26.5 H35 L28 35.2 L21 26.5 H24.3 Z"/><path d="M20.2 38 H35.8" stroke-width="1.4"/></g></svg><span>Descargas</span></div>
<div class="fold" style="left:331px;top:76px"><svg viewBox="-2 -2 60 52"><defs><filter id="fs" x="-10%" y="-10%" width="120%" height="130%"><feGaussianBlur stdDeviation="0.9"/></filter></defs><path d="M1 30 H55 V45 Q55 49.3 51 49.3 H5 Q1 49.3 1 45 Z" fill="#000" opacity=".28" filter="url(#fs)"/><path d="M0 3.2 Q0 0 3.2 0 H18.6 Q20.2 0 21.4 1 L24 3.1 Q25.2 4 26.8 4 H52.8 Q56 4 56 7.2 V40 H0 Z" fill="#a63e18"/><path d="M0 13.8 Q0 11 2.8 11 H19.2 Q20.8 11 22 10.1 L24.4 8.5 Q25.6 7.7 27.2 7.7 H52.8 Q56 7.7 56 10.9 V44 Q56 48 52 48 H4 Q0 48 0 44 Z" fill="#bf5330"/><path d="M0 13.8 Q0 11 2.8 11 H19.2 Q20.8 11 22 10.1 L24.4 8.5 Q25.6 7.7 27.2 7.7 H52.8 Q56 7.7 56 10.9 V42.8 Q56 46.8 52 46.8 H4 Q0 46.8 0 42.8 Z" fill="#d7623b"/><g fill="none" stroke="#7a2a10" stroke-width="1.3" stroke-linejoin="round" stroke-linecap="round"><path d="M30.5 17.5 H22 Q19.5 17.5 19.5 20 V36 Q19.5 38.5 22 38.5 H34 Q36.5 38.5 36.5 36 V23.5 Z" stroke-width="1.5"/><path d="M23 27 H33 M23 30.2 H33 M23 33.4 H28.5" stroke-width="1.3"/></g><path d="M30.3 17.2 L36.8 23.8 H30.3 Z" fill="#7a2a10"/></svg><span>Documentos</span></div>
<div class="fold" style="left:467px;top:76px"><svg viewBox="-2 -2 60 52"><defs><filter id="fs" x="-10%" y="-10%" width="120%" height="130%"><feGaussianBlur stdDeviation="0.9"/></filter></defs><path d="M1 30 H55 V45 Q55 49.3 51 49.3 H5 Q1 49.3 1 45 Z" fill="#000" opacity=".28" filter="url(#fs)"/><path d="M0 3.2 Q0 0 3.2 0 H18.6 Q20.2 0 21.4 1 L24 3.1 Q25.2 4 26.8 4 H52.8 Q56 4 56 7.2 V40 H0 Z" fill="#a63e18"/><path d="M0 13.8 Q0 11 2.8 11 H19.2 Q20.8 11 22 10.1 L24.4 8.5 Q25.6 7.7 27.2 7.7 H52.8 Q56 7.7 56 10.9 V44 Q56 48 52 48 H4 Q0 48 0 44 Z" fill="#bf5330"/><path d="M0 13.8 Q0 11 2.8 11 H19.2 Q20.8 11 22 10.1 L24.4 8.5 Q25.6 7.7 27.2 7.7 H52.8 Q56 7.7 56 10.9 V42.8 Q56 46.8 52 46.8 H4 Q0 46.8 0 42.8 Z" fill="#d7623b"/><rect x="18.6" y="18.6" width="19.2" height="14.4" rx="1.8" fill="none" stroke="#7a2a10" stroke-width="2.8"/><rect x="25.8" y="33.5" width="4.6" height="3.8" fill="#7a2a10"/><rect x="22" y="36.8" width="12.4" height="2.2" rx="0.6" fill="#7a2a10"/></svg><span>Escritorio</span></div>
<div class="fold" style="left:603px;top:76px"><svg viewBox="-2 -2 60 52"><defs><filter id="fs" x="-10%" y="-10%" width="120%" height="130%"><feGaussianBlur stdDeviation="0.9"/></filter></defs><path d="M1 30 H55 V45 Q55 49.3 51 49.3 H5 Q1 49.3 1 45 Z" fill="#000" opacity=".28" filter="url(#fs)"/><path d="M0 3.2 Q0 0 3.2 0 H18.6 Q20.2 0 21.4 1 L24 3.1 Q25.2 4 26.8 4 H52.8 Q56 4 56 7.2 V40 H0 Z" fill="#a63e18"/><path d="M0 13.8 Q0 11 2.8 11 H19.2 Q20.8 11 22 10.1 L24.4 8.5 Q25.6 7.7 27.2 7.7 H52.8 Q56 7.7 56 10.9 V44 Q56 48 52 48 H4 Q0 48 0 44 Z" fill="#bf5330"/><path d="M0 13.8 Q0 11 2.8 11 H19.2 Q20.8 11 22 10.1 L24.4 8.5 Q25.6 7.7 27.2 7.7 H52.8 Q56 7.7 56 10.9 V42.8 Q56 46.8 52 46.8 H4 Q0 46.8 0 42.8 Z" fill="#d7623b"/><path d="M14.5 38 L22.8 23 L27.3 29.2 L30 26 L36.3 38 Z" fill="#7a2a10"/><circle cx="38" cy="20" r="3.9" fill="#7a2a10"/></svg><span>Imágenes</span></div>
<div class="fold" style="left:739px;top:76px"><svg viewBox="-2 -2 60 52"><defs><filter id="fs" x="-10%" y="-10%" width="120%" height="130%"><feGaussianBlur stdDeviation="0.9"/></filter></defs><path d="M1 30 H55 V45 Q55 49.3 51 49.3 H5 Q1 49.3 1 45 Z" fill="#000" opacity=".28" filter="url(#fs)"/><path d="M0 3.2 Q0 0 3.2 0 H18.6 Q20.2 0 21.4 1 L24 3.1 Q25.2 4 26.8 4 H52.8 Q56 4 56 7.2 V40 H0 Z" fill="#a63e18"/><path d="M0 13.8 Q0 11 2.8 11 H19.2 Q20.8 11 22 10.1 L24.4 8.5 Q25.6 7.7 27.2 7.7 H52.8 Q56 7.7 56 10.9 V44 Q56 48 52 48 H4 Q0 48 0 44 Z" fill="#bf5330"/><path d="M0 13.8 Q0 11 2.8 11 H19.2 Q20.8 11 22 10.1 L24.4 8.5 Q25.6 7.7 27.2 7.7 H52.8 Q56 7.7 56 10.9 V42.8 Q56 46.8 52 46.8 H4 Q0 46.8 0 42.8 Z" fill="#d7623b"/><g fill="#7a2a10" transform="translate(-2.6 0.4)"><path d="M24.6 19.6 L38.2 16.6 V21 L24.6 24 Z"/><rect x="24.6" y="20" width="1.5" height="15.5"/><rect x="36.7" y="17" width="1.5" height="17"/><ellipse cx="23.2" cy="36" rx="3" ry="2.6"/><ellipse cx="35.3" cy="34.6" rx="3" ry="2.6"/></g></svg><span>Música</span></div>
<div class="fold" style="left:195px;top:182px"><svg viewBox="-2 -2 60 52"><defs><filter id="fs" x="-10%" y="-10%" width="120%" height="130%"><feGaussianBlur stdDeviation="0.9"/></filter></defs><path d="M1 30 H55 V45 Q55 49.3 51 49.3 H5 Q1 49.3 1 45 Z" fill="#000" opacity=".28" filter="url(#fs)"/><path d="M0 3.2 Q0 0 3.2 0 H18.6 Q20.2 0 21.4 1 L24 3.1 Q25.2 4 26.8 4 H52.8 Q56 4 56 7.2 V40 H0 Z" fill="#a63e18"/><path d="M0 13.8 Q0 11 2.8 11 H19.2 Q20.8 11 22 10.1 L24.4 8.5 Q25.6 7.7 27.2 7.7 H52.8 Q56 7.7 56 10.9 V44 Q56 48 52 48 H4 Q0 48 0 44 Z" fill="#bf5330"/><path d="M0 13.8 Q0 11 2.8 11 H19.2 Q20.8 11 22 10.1 L24.4 8.5 Q25.6 7.7 27.2 7.7 H52.8 Q56 7.7 56 10.9 V42.8 Q56 46.8 52 46.8 H4 Q0 46.8 0 42.8 Z" fill="#d7623b"/><g fill="none" stroke="#7a2a10" stroke-width="1.3" stroke-linejoin="round" stroke-linecap="round"><rect x="20" y="17.5" width="8.2" height="21" stroke-width="1.5"/><path d="M20.2 21 H24 M20.2 24 H23 M20.2 27 H24 M20.2 30 H23 M20.2 33 H24 M20.2 36 H23" stroke-width="1"/></g><path d="M30.6 17.5 H35.8 V33.5 L33.2 39.5 L30.6 33.5 Z" fill="#7a2a10"/><path d="M31.9 21.6 H34.5 V30 H31.9 Z" fill="#d7623b" opacity=".55"/></svg><span>Plantillas</span></div>
<div class="fold" style="left:331px;top:182px"><svg viewBox="-2 -2 60 52"><defs><filter id="fs" x="-10%" y="-10%" width="120%" height="130%"><feGaussianBlur stdDeviation="0.9"/></filter></defs><path d="M1 30 H55 V45 Q55 49.3 51 49.3 H5 Q1 49.3 1 45 Z" fill="#000" opacity=".28" filter="url(#fs)"/><path d="M0 3.2 Q0 0 3.2 0 H18.6 Q20.2 0 21.4 1 L24 3.1 Q25.2 4 26.8 4 H52.8 Q56 4 56 7.2 V40 H0 Z" fill="#a63e18"/><path d="M0 13.8 Q0 11 2.8 11 H19.2 Q20.8 11 22 10.1 L24.4 8.5 Q25.6 7.7 27.2 7.7 H52.8 Q56 7.7 56 10.9 V44 Q56 48 52 48 H4 Q0 48 0 44 Z" fill="#bf5330"/><path d="M0 13.8 Q0 11 2.8 11 H19.2 Q20.8 11 22 10.1 L24.4 8.5 Q25.6 7.7 27.2 7.7 H52.8 Q56 7.7 56 10.9 V42.8 Q56 46.8 52 46.8 H4 Q0 46.8 0 42.8 Z" fill="#d7623b"/><g fill="none" stroke="#7a2a10" stroke-width="1.3" stroke-linejoin="round" stroke-linecap="round"><circle cx="34.2" cy="20.8" r="3.2"/><circle cx="20" cy="27.8" r="3.2"/><circle cx="34.2" cy="34.9" r="3.2"/><path d="M23 26.4 L31.2 22.3 M23 29.3 L31.2 33.4"/></g></svg><span>Público</span></div>
<div class="fold" style="left:467px;top:182px"><svg viewBox="-2 -2 60 52"><defs><filter id="fs" x="-10%" y="-10%" width="120%" height="130%"><feGaussianBlur stdDeviation="0.9"/></filter></defs><path d="M1 30 H55 V45 Q55 49.3 51 49.3 H5 Q1 49.3 1 45 Z" fill="#000" opacity=".28" filter="url(#fs)"/><path d="M0 3.2 Q0 0 3.2 0 H18.6 Q20.2 0 21.4 1 L24 3.1 Q25.2 4 26.8 4 H52.8 Q56 4 56 7.2 V40 H0 Z" fill="#a63e18"/><path d="M0 13.8 Q0 11 2.8 11 H19.2 Q20.8 11 22 10.1 L24.4 8.5 Q25.6 7.7 27.2 7.7 H52.8 Q56 7.7 56 10.9 V44 Q56 48 52 48 H4 Q0 48 0 44 Z" fill="#bf5330"/><path d="M0 13.8 Q0 11 2.8 11 H19.2 Q20.8 11 22 10.1 L24.4 8.5 Q25.6 7.7 27.2 7.7 H52.8 Q56 7.7 56 10.9 V42.8 Q56 46.8 52 46.8 H4 Q0 46.8 0 42.8 Z" fill="#d7623b"/></svg><span>snap</span></div>
<div class="fold" style="left:603px;top:182px"><svg viewBox="-2 -2 60 52"><defs><filter id="fs" x="-10%" y="-10%" width="120%" height="130%"><feGaussianBlur stdDeviation="0.9"/></filter></defs><path d="M1 30 H55 V45 Q55 49.3 51 49.3 H5 Q1 49.3 1 45 Z" fill="#000" opacity=".28" filter="url(#fs)"/><path d="M0 3.2 Q0 0 3.2 0 H18.6 Q20.2 0 21.4 1 L24 3.1 Q25.2 4 26.8 4 H52.8 Q56 4 56 7.2 V40 H0 Z" fill="#a63e18"/><path d="M0 13.8 Q0 11 2.8 11 H19.2 Q20.8 11 22 10.1 L24.4 8.5 Q25.6 7.7 27.2 7.7 H52.8 Q56 7.7 56 10.9 V44 Q56 48 52 48 H4 Q0 48 0 44 Z" fill="#bf5330"/><path d="M0 13.8 Q0 11 2.8 11 H19.2 Q20.8 11 22 10.1 L24.4 8.5 Q25.6 7.7 27.2 7.7 H52.8 Q56 7.7 56 10.9 V42.8 Q56 46.8 52 46.8 H4 Q0 46.8 0 42.8 Z" fill="#d7623b"/><g fill="none" stroke="#7a2a10" stroke-width="1.3" stroke-linejoin="round" stroke-linecap="round"><rect x="18.5" y="18.8" width="23" height="18" rx="0.5" stroke-width="1.4"/><path d="M22.6 18.8 V36.8 M37.4 18.8 V36.8 M22.6 27.8 H37.4" stroke-width="1.3"/></g><g fill="#7a2a10"><rect x="18.5" y="21" width="4" height="1.3"/><rect x="18.5" y="24.2" width="4" height="1.3"/><rect x="18.5" y="27.4" width="4" height="1.3"/><rect x="18.5" y="30.6" width="4" height="1.3"/><rect x="18.5" y="33.6" width="4" height="1.3"/><rect x="37.5" y="21" width="4" height="1.3"/><rect x="37.5" y="24.2" width="4" height="1.3"/><rect x="37.5" y="27.4" width="4" height="1.3"/><rect x="37.5" y="30.6" width="4" height="1.3"/><rect x="37.5" y="33.6" width="4" height="1.3"/></g></svg><span>Vídeos</span></div>

</div>

</div>
</body>
</html>
